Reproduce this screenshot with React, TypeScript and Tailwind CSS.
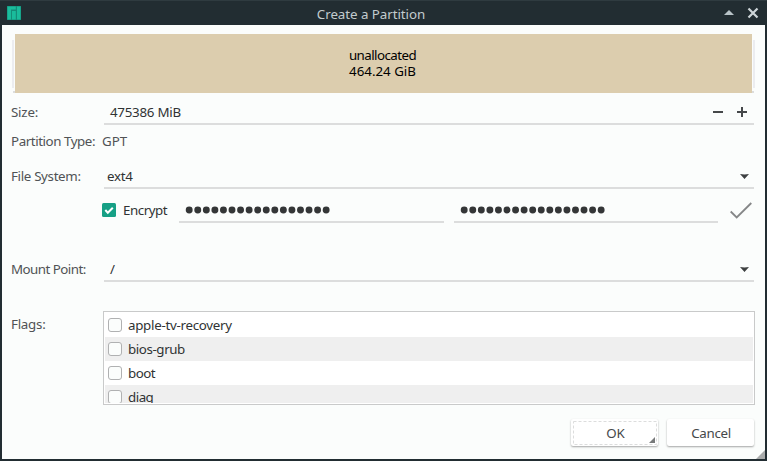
import type { ReactNode } from "react";

function Label({ className = "", children }: { className?: string; children: ReactNode }) {
  return <div className={"w-[93px] shrink-0 whitespace-nowrap pl-[2px] text-[#505355] " + className}>{children}</div>;
}

function Caret() {
  return (
    <svg className="mr-[5px] h-[5px] w-[9px] shrink-0" viewBox="0 0 9 5">
      <path d="M0 0 4.5 .6 9 0 4.5 5Z" fill="#3d4041" />
    </svg>
  );
}

function Dots({ className }: { className: string }) {
  return (
    <div className={"flex h-6 items-center border-b-2 border-[#dcdddd] pl-[6px] " + className}>
      <svg className="h-[8px] w-[146px]" viewBox="0 0 146 8">
        {Array.from({ length: 17 }, (_, i) => (
          <circle key={i} cx={4.2 + i * 8.56} cy={4} r={3.45} fill="#343637" />
        ))}
      </svg>
    </div>
  );
}

function Flag({ name, shaded, spacing }: { name: string; shaded?: boolean; spacing: string }) {
  return (
    <div className={"flex h-6 shrink-0 items-center pl-[3px] " + (shaded ? "bg-[#efefef]" : "bg-white")}>
      <span className="h-[14px] w-[14px] rounded-[3px] border border-[#b0b1b2] bg-[#fbfdfc]" />
      <span className={"ml-[6px] " + spacing}>{name}</span>
    </div>
  );
}

export default function App() {
  return (
    <div className="flex h-[461px] w-[767px] flex-col overflow-hidden bg-[#222d32] font-['Noto_Sans',sans-serif] text-[13.33px] leading-4 text-[#303334]">
      <header className="flex h-[25px] shrink-0 items-center border-t border-[#2f3b40] pl-[7px] pr-[7px]">
        <svg className="h-[14px] w-[14px]" viewBox="0 0 14 14">
          <path fill="#148c78" d="M0 0h14v14H0Z" />
          <path fill="#1abc9c" d="M.5.5h8.3v3H4v10H.5ZM5 5h3.8v8.5H5ZM10 .5h3.5v13H10Z" />
        </svg>
        <div className="flex-1 pr-[3px] pt-[2px] text-center tracking-[-0.05px] text-[#c2cbce]">Create a Partition</div>
        <svg className="h-[12px] w-[36px]" viewBox="0 0 36 12">
          <path d="M0 8 5 3l5 5Z" fill="#b8c3c7" />
          <path d="m24.5 1.5 9 9m0-9-9 9" stroke="#cdd5d8" strokeWidth="2.2" />
        </svg>
      </header>

      <main className="relative mx-[2px] mb-[2px] flex flex-1 flex-col bg-[#fbfdfc] px-[7px] pt-[9px]">
        <div className="flex h-[59px] items-center pl-[3px]">
          <span className="h-12 w-[2px] bg-[#ecedf0]" />
          <div className="ml-px flex h-full w-[737px] flex-col items-center justify-center bg-[#dccdae] pb-[2px] pr-[2px] text-black">
            <span className="tracking-[-0.55px]">unallocated</span>
            <span>464.24 GiB</span>
          </div>
          <span className="ml-px h-12 w-[2px] bg-[#ecedf0]" />
          <span className="absolute left-[11px] top-[66px] h-[2px] w-[2px] bg-[#dcdddd]" />
          <span className="absolute left-[750px] top-[66px] h-[2px] w-[2px] bg-[#dcdddd]" />
        </div>

        <div className="mt-2 flex h-6 items-center">
          <Label className="pb-[2px] tracking-[-0.2px]">Size:</Label>
          <div className="ml-[2px] flex h-6 w-[650px] items-center border-b-2 border-[#dcdddd] pl-[6px]">
            <span className="flex-1 tracking-[-0.25px]">475386 MiB</span>
            <svg className="mr-[7px] h-[10px] w-[34px]" viewBox="0 0 34 10">
              <path d="M0 4h10v2H0ZM24 4h10v2H24ZM28 0h2v10h-2Z" fill="#45484a" />
            </svg>
          </div>
        </div>

        <div className="mt-1 flex h-6 items-center text-[#505355]">
          <Label className="tracking-[-0.43px]">Partition Type:</Label>
          <span>GPT</span>
        </div>

        <div className="mt-3 flex h-6 items-center">
          <Label className="pb-[2px] tracking-[-0.33px]">File System:</Label>
          <div className="ml-[2px] flex h-6 w-[650px] items-center border-b-2 border-[#dcdddd] pl-[3px]">
            <span className="flex-1 tracking-[-0.3px]">ext4</span>
            <Caret />
          </div>
        </div>

        <div className="mt-[10px] flex h-6 items-center pl-[93px]">
          <svg className="mb-[2px] h-[14px] w-[14px]" viewBox="0 0 14 14">
            <rect width="14" height="14" rx="1.5" fill="#16a085" />
            <path d="m3.3 7 2.5 2.7 5-5" fill="none" stroke="#fff" strokeWidth="2" />
          </svg>
          <span className="ml-[7px] w-[56px] pb-[2px] tracking-[-0.45px]">Encrypt</span>
          <Dots className="w-[265px]" />
          <Dots className="ml-[10px] w-[264px]" />
          <svg className="ml-3 h-[18px] w-[22px]" viewBox="0 0 22 18">
            <path d="m.7 9.5 6 6L21.3 1" fill="none" stroke="#858788" strokeWidth="1.8" />
          </svg>
        </div>

        <div className="mt-[35px] flex h-6 items-center">
          <Label className="pb-[2px] tracking-[-0.53px]">Mount Point:</Label>
          <div className="ml-[2px] flex h-6 w-[650px] items-center border-b-2 border-[#dcdddd] pl-[6px]">
            <span className="flex-1">/</span>
            <Caret />
          </div>
        </div>

        <div className="mt-[29px] flex h-[94px] items-start">
          <Label className="pt-[5px] tracking-[-0.25px]">Flags:</Label>
          <div className="ml-px h-[94px] w-[652px] border border-[#c9caca] bg-white p-px">
            <div className="flex h-[90px] flex-col overflow-hidden">
              <Flag name="apple-tv-recovery" spacing="tracking-[-0.28px]" />
              <Flag name="bios-grub" spacing="tracking-[-0.4px]" shaded />
              <Flag name="boot" spacing="tracking-[-0.55px]" />
              <Flag name="diag" spacing="tracking-[-0.5px]" shaded />
            </div>
          </div>
        </div>

        <div className="mt-[14px] flex justify-end gap-[9px] pr-[4px] text-[#45484a]">
          <button className="relative flex h-[27px] w-[87px] items-center justify-center rounded-[2px] bg-white shadow-[0_1px_2px_rgba(0,0,0,0.35)]">
            <svg className="absolute inset-0 h-[27px] w-[87px]" viewBox="0 0 87 27">
              <rect x="2.5" y="2.5" width="83" height="23" fill="none" stroke="#dcdddd" strokeDasharray="3 2" />
              <path d="M78 24h6v-6Z" fill="#77797a" />
            </svg>
            <span className="relative pl-[2px] pt-px">OK</span>
          </button>
          <button className="flex h-[27px] w-[87px] items-center justify-center rounded-[2px] bg-white pl-px pt-px tracking-[-0.3px] shadow-[0_1px_2px_rgba(0,0,0,0.35)]">Cancel</button>
        </div>
        <svg className="absolute bottom-0 right-0 h-[9px] w-[9px]" viewBox="0 0 9 9">
          <path d="M0 9 9 0v9Z" fill="#a9abab" />
        </svg>
      </main>
    </div>
  );
}
